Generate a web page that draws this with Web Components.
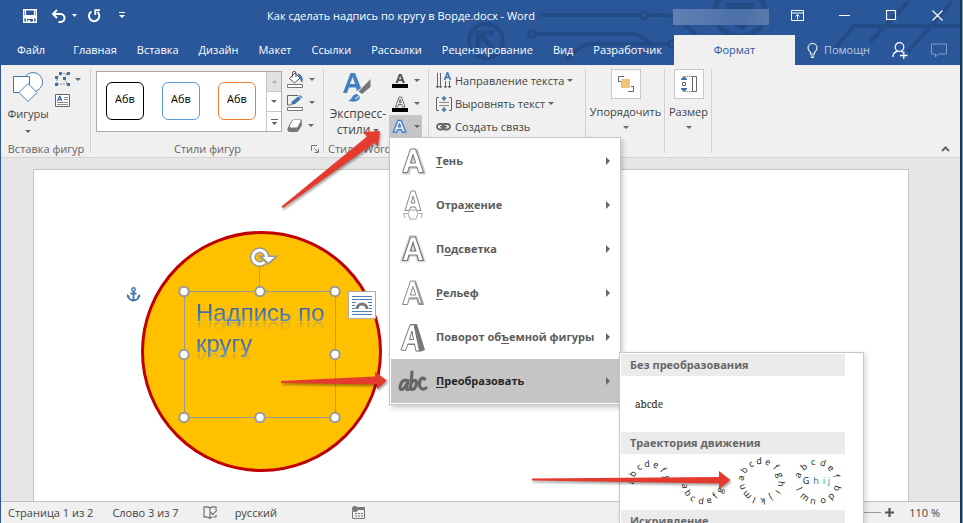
<!DOCTYPE html>
<html lang="ru">
<head>
<meta charset="utf-8">
<title>Как сделать надпись по кругу в Ворде.docx - Word</title>
<style>
html, body { margin: 0; height: 100%; overflow: hidden; }
body { font: 11px/16px "Open Sans", "Noto Sans", sans-serif; color: #444; background: #6aa0b8; }
</style>
</head>
<body>
<word-window></word-window>
<script>
function define(name, css, html) {
  customElements.define(name, class extends HTMLElement {
    connectedCallback() {
      if (this.shadowRoot) return;
      const root = this.attachShadow({ mode: 'open' });
      root.innerHTML = '<style>*{box-sizing:border-box}button{font:inherit;color:inherit;background:none;border:0;padding:0;margin:0;text-align:inherit}' + css + '</style>' +
        (typeof html === 'function' ? html(this) : html);
    }
  });
}

const A = 'M2.5 25.5 L10.5 2 H15.5 L23.5 25.5 H18.5 L17 20 H9 L7.5 25.5 Z M10.3 16 H15.7 L13 7.5 Z';
const ICONS = {
  save: [14, 14, '<path d="M.7.7h12.6v12.6H.7z" fill="none" stroke="#fff" stroke-width="1.4"/><path d="M2.5 1v5.5h9V1M3.5 13.5V9.5h7v4" fill="none" stroke="#fff" stroke-width="1.2"/><path d="M1 6.5h12v3H1z" fill="#fff"/><path d="M5 11h2v3H5z" fill="#fff"/>'],
  undo: [15, 14, '<path d="M2 5h7.5a4 4 0 0 1 0 8H7.5" fill="none" stroke="#fff" stroke-width="2"/><path d="M6 1 2 5l4 4" fill="none" stroke="#fff" stroke-width="2"/>'],
  redo: [14, 14, '<path d="M4.5 2.5A5.2 5.2 0 1 0 10.5 3" fill="none" stroke="#fff" stroke-width="2"/><path d="M13 1.2H8.3V6" fill="none" stroke="#fff" stroke-width="1.8"/>'],
  qat: [6, 7, '<path d="M0 .5h6" stroke="#fff"/><path d="M0 3h6L3 6z" fill="#fff"/>'],
  downw: [5, 3, '<path d="M0 0h5L2.5 3z" fill="#fff"/>'],
  down: [6, 3, '<path d="M0 0h6L3 3z" fill="#666"/>'],
  up: [5, 3, '<path d="M0 3h5L2.5 0z" fill="#ababab"/>'],
  more: [7, 6, '<path d="M0 .5h7" stroke="#666"/><path d="M.5 3h6l-3 3z" fill="#666"/>'],
  right: [4, 8, '<path d="M0 0v8l4-4z" fill="#666"/>'],
  opts: [13, 11, '<path d="M.5.500h12v10H.5zM.5 3h12M6.500 9.500V5M4.500 6.500l2-2 2 2" fill="none" stroke="#fff"/>'],
  min: [11, 11, '<path d="M0 5.500h11" stroke="#fff"/>'],
  max: [11, 11, '<path d="M.5.500h9v9h-9z" fill="none" stroke="#fff" stroke-width="1.200"/>'],
  close: [11, 11, '<path d="M.5.500l10 10m0-10-10 10" stroke="#fff" stroke-width="1.200"/>'],
  bulb: [11, 15, '<path d="M3.500 11V9.500C2 8 1 6.800 1 5a4.500 4.500 0 0 1 9 0c0 1.800-1 3-2.500 4.500V11zM3.500 13h4" fill="none" stroke="#e8eef6" stroke-width="1.200"/><path d="M4 14.500h3" stroke="#e8eef6"/>'],
  person: [16, 17, '<circle cx="7.500" cy="5" r="4.300" fill="none" stroke="#fff" stroke-width="1.200"/><path d="M.8 15c.4-3.800 2.500-5.500 5-6M9 9l2 1.500M8 13.500h7.500M11.800 9.500v7.500" fill="none" stroke="#fff" stroke-width="1.300"/>'],
  bubble: [17, 15, '<path d="M.5 1h15v10H7.500l-3 3v-3h-4z" fill="none" stroke="#7f9cc7"/>'],
  shapes: [30, 30, '<circle cx="20" cy="10" r="9.500" fill="#fff" stroke="#4a80b8"/><path d="M.5 4.500h16v16H.5z" fill="#fff" stroke="#3c74ad"/><path d="M15 11.500 24 20.500 15 29.500 6 20.500z" fill="#fff" stroke="#4a80b8"/>'],
  points: [16, 14, '<path d="M5 1.500h8M12 2 9 7l4 5M2 12h11M5 2 2 6v6" fill="none" stroke="#888" stroke-dasharray="2 1"/><path d="M4 0h3v3H4zM12 0h3v3h-3zM0 4h3v3H0zM8 5h3v3H8zM0 11h3v3H0zM12 11h3v3h-3z" fill="#3c74ad"/>'],
  textbox: [15, 13, '<path d="M.5.500h14v12H.5z" fill="#fff" stroke="#666"/><path d="M9 3.500h4M9 5.500h4M2 8.500h11M2 10.500h11" stroke="#888"/><path d="M2.500 7 4.500 2.500h.5L7 7M3 5.500h3" fill="none" stroke="#3c74ad" stroke-width="1.300"/>'],
  fill: [17, 17, '<path d="M.5 13.500h15v3H.5z" fill="#fff" stroke="#777"/><path d="M2.500 7.500 8 2l5 5-5.500 5z" fill="#fff" stroke="#555"/><path d="M5.500 6V2a1.700 1.700 0 0 1 3.400 0v4" fill="none" stroke="#555"/><path d="M10 2.500c4 .5 6.500 3.500 5.500 9-1.500-.5-2.500-3-2.500-5z" fill="#3c74ad"/>'],
  outline: [17, 17, '<path d="M.5 13.500h15v3H.5z" fill="#fff" stroke="#777"/><path d="M11 1.500H.5v9.500H4" fill="none" stroke="#666"/><path d="M4 11l1-3.500L13 1l2.500 2.500L8 10z" fill="#3c74ad"/><path d="M11.500 2l3 3" stroke="#fff"/>'],
  effect: [16, 13, '<path d="M1 8.500 4 2.500Q4.800.5 7 .5h6.500q1.800 0 1.300 2v4l-3 5q-.8 1.500-3 1.500H3Q0 13 .5 10z" fill="#777"/><path d="M5.200 2Q6 1 7 1h5.500q1.500 0 1 1.300L11 7.500q-.5 1-2 1H4q-1.800 0-1.200-1.500z" fill="#fff"/>'],
  launch: [8, 8, '<path d="M.5 6V.500H6M3.500 3.500 7 7M7.500 3.500v4h-4" fill="none" stroke="#777"/>'],
  express: [30, 31, '<path d="M0 21 7.500 1h4.500L18 16l-4 3-1.300-3.500H6L4 21zM7 12h5L9.600 5z" fill="#4382be" fill-rule="evenodd"/><path d="M27.500 7v8L19 22l-3.500-2.500z" fill="#777"/><path d="M15 20l4 3-2 2-4-3z" fill="#fff"/><path d="M5 28.500c4 0 4-6 8-6.500 3 .500 5 3 3 5.500-3 3-8 2.500-11 1z" fill="#4382be"/><path d="M12 26c2 1 3 0 3-2" stroke="#fff" fill="none"/>'],
  afill: [16, 15, '<path d="M0 11h16v4H0z" fill="#000"/><path d="M3.500 10 7 1h2.500L13 10h-2.500l-.7-2H6.500L5.800 10zM7 6.300h2.300L8.200 3z" fill="#555" fill-rule="evenodd"/>'],
  aline: [16, 16, '<path d="M0 12h16v4H0z" fill="#000"/><path d="M3.500 11 7 1h2.500L13 11h-2.500l-.7-2.500H6.500L5.800 11zM7 6.800h2.300L8.200 3z" fill="#fff" stroke="#666" fill-rule="evenodd"/>'],
  aeff: [16, 15, '<path d="M1.500 13 6 1.500h3L13.500 13H10.500L9.500 10.500h-4L4.500 13zM6.300 8h2.400L7.500 4.500z" fill="#e8f0fa" stroke="#7fa9d8" stroke-width="2.500" fill-rule="evenodd"/><path d="M1.500 13 6 1.500h3L13.500 13H10.500L9.500 10.500h-4L4.500 13zM6.300 8h2.400L7.500 4.500z" fill="#dfe9f5" stroke="#3c74b5" fill-rule="evenodd"/>'],
  dir: [16, 17, '<path d="M1.500 1v15M4.500 1v15M9.500 9v7M13.500 9v7" stroke="#666"/><path d="M0 14l1.500 2L3 14M3.500 14l1 2 1.500-2M8 14l1.500 2 1.500-2M12 14l1.500 2 1.500-2" fill="none" stroke="#666"/><path d="M8.500 8 11.500.5 14.500 8M9.500 5.500h4" fill="none" stroke="#3c74ad" stroke-width="1.600"/>'],
  align: [16, 16, '<path d="M3 1.500H.5v13H3M13 1.500h2.500v13H13" fill="none" stroke="#666"/><path d="M3 6.500h10M3 9.500h10" stroke="#888"/><path d="M8 1v4M6 3l2-2 2 2M8 11v4M6 13l2 2 2-2" fill="none" stroke="#3c74ad" stroke-width="1.500"/>'],
  link: [16, 8, '<rect x="1" y="1" width="7.500" height="5.500" rx="2.700" fill="none" stroke="#666" stroke-width="1.800"/><rect x="6.500" y="1" width="7.500" height="5.500" rx="2.700" fill="none" stroke="#666" stroke-width="1.800"/><path d="M4 3.700h7" stroke="#666" stroke-width="1.500"/>'],
  arrange: [16, 16, '<path d="M.5 6V.500H6M10 15.500h5.500V10" fill="none" stroke="#666"/><path d="M3 3h9v9H3z" fill="#efc477"/><path d="M1 5.500h2M13 10.500h2" stroke="#666"/>'],
  size: [16, 16, '<path d="M11.500.500h4v15h-4z" fill="#fff" stroke="#666"/><path d="M4 .5h7M4 15.500h7" stroke="#777" stroke-dasharray="1 1"/><path d="M1.500 6.500h3v3h-3z" fill="#fff" stroke="#666"/><path d="M3 0 6 3v1H0V3zM3 16l3-3v-1H0v1z" fill="#3c74ad"/>'],
  chevron: [9, 6, '<path d="M1 5l3.500-3.500L8 5" fill="none" stroke="#666" stroke-width="2"/>'],
  proof: [15, 14, '<path d="M7 12V2Q5 .5 1 1v10q4-.5 6 1.500Q8 11 10 11M7 2Q9 .5 13 1v3M10.500 11H13V9M8 6.500l2 2L14 4" fill="none" stroke="#666" stroke-width="1.100"/>'],
  macro: [13, 13, '<path d="M.5 5v7.500h12V3H5" fill="#f0f0f0" stroke="#777"/><path d="M6 1h7v3H6z" fill="#777"/><path d="M3 7.500h8M3 10h8" stroke="#777" stroke-dasharray="2 1"/><circle cx="3" cy="3" r="3" fill="#777"/>'],
  plus: [9, 9, '<path d="M0 4.500h9M4.500 0v9" stroke="#555" stroke-width="2.200"/>'],
  shadow: [26, 29, `<path d="${A}" transform="translate(1.500 1)" fill="#bbb" stroke="#ccc" stroke-width="2" fill-rule="evenodd"/><path d="${A}" fill="#fff" stroke="#777" fill-rule="evenodd"/>`],
  reflect: [26, 31, `<path d="M5 20.500 11 1h4L21 20.500H16.500L15.500 17h-5L9.500 20.500zM11 13h4L13 6z" fill="#fff" stroke="#888" fill-rule="evenodd"/><path d="M3.500 23.500H8L10 20h6l2 3.500h4.500M3.500 23.500 5 28M22.500 23.500 21 28M8 23.500 10 29h6l2-5.500" fill="none" stroke="#aaa"/>`],
  glow: [26, 29, `<path d="${A}" fill="#ddd" stroke="#ddd" stroke-width="4"/><path d="${A}" fill="#fff" stroke="#777" stroke-width="1.200" fill-rule="evenodd"/>`],
  bevel: [26, 29, `<path d="${A}" fill="#fff" stroke="#888" fill-rule="evenodd"/><path d="M15 3l7 21.500h-3L17.500 19H8.500" fill="none" stroke="#999" stroke-width="1.500"/>`],
  rotate: [26, 29, '<path d="M10 1h7l8 26-4 1.500h-3L11 4z" fill="#777"/><path d="M9 18h9l2 4H8z" fill="#888"/><path d="M1 27 10 2l4-.5L19.500 28H16l-1.500-7H8L5.500 27.500zM9.500 16.500h4L12 8z" fill="#fff" stroke="#777" fill-rule="evenodd"/>'],
  abc: [30, 22, '<g fill="none" stroke="#666" stroke-width="3.200" stroke-linecap="round"><path d="M9 10.500c-4-2-6.500 3-7 6.500-.5 4 4 3 6-2M10 10.500 8.500 18q.5 2.500 2.500 1"/><path d="M14 2 12.500 18.500q1.500 1.800 4 0 3-4 1.500-7.500-2-2-4.500 2"/><path d="M26.500 9q-2-2-4 .5-2 4-.5 7.500 2 3.500 6 1"/></g>'],
  anchor: [13, 15, '<circle cx="6.500" cy="2.500" r="1.700" fill="none" stroke="#3c74ad" stroke-width="1.400"/><path d="M6.500 4v9.500M3.500 6.500h6M1 8.500q.5 4.500 5.500 5 5-.500 5.500-5" fill="none" stroke="#3c74ad" stroke-width="1.800"/><path d="M0 10.500V7l3 2.500zM13 10.500V7l-3 2.500z" fill="#3c74ad"/>'],
  wrap: [20, 20, '<path d="M0 1.500h20M0 4.500h20M0 16.500h20M0 19.500h20M0 7.500h4M0 10.500h3M0 13.500h3M16 7.500h4M17 10.500h3M17 13.500h3" stroke="#4a80b8"/><path d="M5 14a5 5 0 0 1 10 0" fill="none" stroke="#777" stroke-width="3"/>']
};
define('w-icon', ':host{display:inline-flex;flex:none}svg{display:block}', el => {
  const [w, h, s] = ICONS[el.getAttribute('name')];
  return `<svg width="${w}" height="${h}" viewBox="0 0 ${w} ${h}" aria-hidden="true">${s}</svg>`;
});
const ic = n => `<w-icon name="${n}"></w-icon>`;

define('title-bar', `
:host{display:flex;align-items:center;height:35px;color:#fff;position:relative;padding-bottom:4px}
.qat{display:flex;align-items:center;gap:6px;padding-left:22px;width:128px}
.qat button:nth-child(2){margin-left:8px}.qat button:nth-child(4){margin-left:4px}.qat button:nth-child(5){margin-left:12px}
.t{flex:1;text-align:center;white-space:nowrap}
.acct{width:96px;height:16px;margin-top:2px;background:linear-gradient(90deg,#6080b2,#5577ad 40%,#4c70a8 70%,#5b7aa8)}
.win{display:flex;justify-content:space-between;width:152px;margin:0 17px 0 22px}
button{display:flex}`,
`<div class="qat"><button aria-label="Сохранить">${ic('save')}</button><button aria-label="Отменить">${ic('undo')}</button><button aria-label="Список отмены">${ic('downw')}</button><button aria-label="Повторить">${ic('redo')}</button><button aria-label="Настройка панели">${ic('qat')}</button></div>
<div class="t">Как сделать надпись по кругу в Ворде.docx - Word</div><div class="acct"></div>
<div class="win"><button aria-label="Параметры ленты">${ic('opts')}</button><button aria-label="Свернуть">${ic('min')}</button><button aria-label="Развернуть">${ic('max')}</button><button aria-label="Закрыть">${ic('close')}</button></div>`);

define('ribbon-tab', `:host{display:flex;flex:none}button{padding:0 10px;height:30px;color:#fff;white-space:nowrap}
:host([selected]) button{background:#f0f0f0;color:#2a579a;width:121px;text-align:center}`,
'<button role="tab"><slot></slot></button>');

define('tab-strip', `:host{display:flex;align-items:center;height:30px;position:relative;padding-left:6px}
nav{display:flex;flex:none}ribbon-tab:first-child{margin-right:8px}ribbon-tab[selected]{margin-left:2px}
.help{display:flex;align-items:center;gap:6px;color:#b8c9e2;margin-left:12px}
.end{display:flex;align-items:center;gap:23px;margin:0 12px 0 auto}.end button{display:flex}`,
`<nav role="tablist">${['Файл', 'Главная', 'Вставка', 'Дизайн', 'Макет', 'Ссылки', 'Рассылки', 'Рецензирование', 'Вид', 'Разработчик'].map(t => `<ribbon-tab>${t}</ribbon-tab>`).join('')}<ribbon-tab selected>Формат</ribbon-tab></nav>
<button class="help">${ic('bulb')}<span>Помощн</span></button>
<div class="end"><button aria-label="Общий доступ">${ic('person')}</button><button aria-label="Примечания">${ic('bubble')}</button></div>`);

define('circuit-art', ':host{position:absolute;right:0;top:0;width:500px;height:65px}svg{display:block}',
`<svg width="500" height="65" fill="none" stroke="#234b86" stroke-width="4" aria-hidden="true"><circle cx="26" cy="41" r="17"/><path d="M18 50V33h16M19 34l14 14" stroke-width="5"/><path d="M80 15h100M188 15h18q10 0 16 7l14 12M76 34h94q10 0 18 7l6 5M106 60l12-11q6-5 14-5h76"/><circle cx="184" cy="15" r="3.500" stroke-width="3"/><circle cx="72" cy="34" r="3.500" stroke-width="3"/><circle cx="212" cy="44" r="3.500" stroke-width="3"/><circle cx="280" cy="12" r="25" stroke-width="6"/><path d="M268 5h24v14l-10 9-14-8z" fill="#234b86"/><path d="M370 54l24-28h106M410 42l38-40M448 52 492 2"/></svg>`);

define('ribbon-group', `:host{display:flex;flex-direction:column;flex:none;height:88px;margin-top:4px;position:relative;background:linear-gradient(#d0d0d0,#d0d0d0) top right/1px 84px no-repeat}
.b{flex:1;display:flex;min-height:0}.l{display:flex;align-items:center;justify-content:center;height:16px;line-height:16px;color:#666;white-space:nowrap}
:host([start]) .l{justify-content:flex-start;padding-left:4px}
.x{position:absolute;right:5px;bottom:4px;display:flex}`,
el => `<div class="b"><slot></slot></div><div class="l">${el.getAttribute('label') || ''}</div>${el.hasAttribute('launch') ? `<button class="x" aria-label="Параметры">${ic('launch')}</button>` : ''}`);

define('style-swatch', `:host{display:flex}button{width:38px;height:38px;border:1px solid var(--c);border-radius:6px;background:#fff;color:#000;font:11px/16px "Open Sans","Noto Sans",sans-serif;text-align:center;padding-bottom:4px}`, '<button>Абв</button>');

define('ribbon-bar', `
:host{display:flex;height:93px;background:#f0f0f0;border-bottom:1px solid #d4d4d4;position:relative}
.big{display:flex;flex-direction:column;align-items:center;line-height:16px;white-space:nowrap}
.col{display:flex;flex-direction:column}.row{display:flex;align-items:center;gap:6px}
.g1{width:90px}.g2{width:233px}.g3{width:105px}.g4{width:157px}.g5{width:79px}.g6{width:47px}
.g1 .big{width:54px;padding-top:3px;gap:4px}.g1 .big w-icon:last-child{margin-top:4px}
.g1 .col{gap:8px;padding-top:3px}.g1 .row{gap:4px}
.gal{display:flex;width:186px;height:61px;margin:2px 0 0 5px;border:1px solid #ababab;background:#fff}
.sw{flex:1;display:flex;gap:18px;padding:10px 0 0 9px}
.scr{display:flex;flex-direction:column;width:15px;border-left:1px solid #c6c6c6}
.scr button{flex:1;display:flex;align-items:center;justify-content:center}.scr button+button{border-top:1px solid #c6c6c6}.scr button:first-child{background:#e1e1e1}
.g2 .fx{gap:6px;padding:2px 0 0 5px}.g2 .row{height:17px;gap:5px}
.g3 .big{width:65px;padding:3px 0 0 3px;font-size:12px}.g3 .big w-icon{margin-bottom:3px}.st{display:flex;align-items:center;gap:3px}.g3 .big .st w-icon{margin:0}
.g3 .row{width:33px;height:23px;padding-left:3px;gap:6px}.g3 .on{background:#c5c5c5}
.g4 .row{height:23px;padding-left:7px;gap:3px;white-space:nowrap}
.sq{width:30px;height:30px;background:#fdfdfd;border:1px solid #c8c8c8;display:flex;align-items:center;justify-content:center;margin-bottom:5px}
.g5 .big,.g6 .big{flex:1}.g5 .big>w-icon,.g6 .big>w-icon{margin-top:6px}
.fold{position:absolute;right:10px;bottom:5px;display:flex}`,
`<ribbon-group class="g1" label="Вставка фигур"><button class="big">${ic('shapes')}<span>Фигуры</span>${ic('down')}</button>
<div class="col"><button class="row" aria-label="Изменить фигуру">${ic('points')}${ic('down')}</button><button class="row" aria-label="Надпись">${ic('textbox')}</button></div></ribbon-group>
<ribbon-group class="g2" label="Стили фигур" launch><div class="gal"><div class="sw"><style-swatch style="--c:#000"></style-swatch><style-swatch style="--c:#5b9bd5"></style-swatch><style-swatch style="--c:#ed7d31"></style-swatch></div>
<div class="scr"><button aria-label="Вверх">${ic('up')}</button><button aria-label="Вниз">${ic('down')}</button><button aria-label="Ещё">${ic('more')}</button></div></div>
<div class="col fx">${[['fill', 'Заливка'], ['outline', 'Контур'], ['effect', 'Эффекты']].map(x => `<button class="row" aria-label="${x[1]}">${ic(x[0])}${ic('down')}</button>`).join('')}</div></ribbon-group>
<ribbon-group class="g3" label="Стили WordArt" start><button class="big">${ic('express')}<span>Экспресс-</span><span class="st">стили${ic('down')}</span></button>
<div class="col"><button class="row" aria-label="Заливка текста">${ic('afill')}${ic('down')}</button><button class="row" aria-label="Контур текста">${ic('aline')}${ic('down')}</button><button class="row on" aria-label="Текстовые эффекты">${ic('aeff')}${ic('down')}</button></div></ribbon-group>
<ribbon-group class="g4"><div class="col"><button class="row">${ic('dir')}<span>Направление текста</span>${ic('down')}</button><button class="row">${ic('align')}<span>Выровнять текст</span>${ic('down')}</button><button class="row">${ic('link')}<span>Создать связь</span></button></div></ribbon-group>
<ribbon-group class="g5"><button class="big"><span class="sq">${ic('arrange')}</span><span>Упорядочить</span>${ic('down')}</button></ribbon-group>
<ribbon-group class="g6"><button class="big"><span class="sq">${ic('size')}</span><span>Размер</span>${ic('down')}</button></ribbon-group>
<button class="fold" aria-label="Свернуть ленту">${ic('chevron')}</button>`);

const knobs = [[184, 291], [260, 291], [335, 291], [184, 354], [335, 354], [184, 417], [260, 417], [335, 417]];
define('circle-shape', `:host{position:absolute;left:107px;top:61px;width:242px;height:242px}
svg{position:absolute;inset:0}
.txt{position:absolute;left:55px;top:66px;width:150px;font:24px/31px "Liberation Sans",Arial,sans-serif}
.txt span{display:block;width:max-content;color:transparent;background:linear-gradient(#44618c 15%,#3f6cab 45%,#5c8fd0 85%);-webkit-background-clip:text;background-clip:text;-webkit-box-reflect:below -13px linear-gradient(transparent 50%,rgba(0,0,0,.4) 80%)}
.anc{position:absolute;left:-14px;top:56px}.lay{position:absolute;left:207px;top:60px;width:28px;height:28px;border:1px solid #ababab;background:#fff;display:flex;align-items:center;justify-content:center}`,
`<svg width="242" height="242" viewBox="141 231 242 242"><circle cx="261.500" cy="351.500" r="119" fill="#ffc000" stroke="#c00000" stroke-width="3"/><path d="M184.500 291.500h151v126h-151zM259.500 291V267" fill="none" stroke="#999"/></svg>
<div class="txt"><span>Надпись по</span><span>кругу</span></div>
<svg width="242" height="242" viewBox="141 231 242 242" fill="#fff" stroke="#999" stroke-width="2">${knobs.map(k => `<circle cx="${k[0]}" cy="${k[1] + 0.5}" r="4.700"/>`).join('')}
<path d="M264.500 262A6.800 6.800 0 1 1 266.500 257" fill="none" stroke-width="6"/><path d="M261.500 257h13.500l-6.500 6z" stroke-width="3"/><path d="M264.500 262A6.800 6.800 0 1 1 266.500 257" fill="none" stroke="#fff" stroke-width="3"/><path d="M262.500 257h12l-6 5.500z" stroke="none"/></svg>
<w-icon class="anc" name="anchor"></w-icon><button class="lay" aria-label="Параметры разметки">${ic('wrap')}</button>`);

define('doc-canvas', `:host{display:block;flex:1;min-height:0;background:#e6e6e6;padding:11px 51px 0 32px;overflow:hidden}
.page{position:relative;height:100%;background:#fff;border:1px solid #c6c6c6;border-bottom:0}`, '<div class="page"><circle-shape></circle-shape></div>');

define('status-bar', `:host{display:flex;align-items:center;flex:none;height:22px;background:#f0f0f0;border-top:1px solid #c0c0c0;padding:0 20px 0 7px;white-space:nowrap}
.a{display:flex;align-items:center}.w{margin:0 24px 0 19px}.m{display:flex;margin-left:75px}.r{margin-left:17px}
.z{margin-left:auto;display:flex;align-items:center;gap:4px}input{appearance:none;width:96px;height:1px;background:#999;margin:0}
input::-webkit-slider-thumb{appearance:none;width:5px;height:11px;background:#666}.p{margin-left:11px}button{display:flex}`,
`<div class="a"><span>Страница 1 из 2</span><span class="w">Слово 3 из 7</span>${ic('proof')}<span class="r">русский</span><span class="m">${ic('macro')}</span></div>
<div class="z"><input type="range" aria-label="Масштаб" value="20"><button aria-label="Увеличить">${ic('plus')}</button><span class="p">110 %</span></div>`);

define('menu-row', `:host{display:block}button{display:flex;align-items:center;width:100%;height:44px;padding:0 9px 0 6px;font-weight:700;color:#5c5c5c}
.i{display:flex;justify-content:center;width:32px;margin-right:7px}.t{flex:1;white-space:nowrap}
:host([on]) button{background:#c5c5c5;color:#262626}`,
el => `<button role="menuitem"><span class="i">${ic(el.getAttribute('icon'))}</span><span class="t"><slot></slot></span>${ic('right')}</button>`);

define('effects-menu', `:host{position:absolute;left:388px;top:137px;width:232px;background:#fff;border:1px solid #c6c6c6;padding:1px;box-shadow:2px 3px 5px rgba(0,0,0,.2)}u{text-underline-offset:2px}`,
`<div role="menu"><menu-row icon="shadow"><u>Т</u>ень</menu-row><menu-row icon="reflect">Отра<u>ж</u>ение</menu-row><menu-row icon="glow">П<u>о</u>дсветка</menu-row><menu-row icon="bevel"><u>Р</u>ельеф</menu-row><menu-row icon="rotate">Поворот об<u>ъ</u>емной фигуры</menu-row><menu-row icon="abc" on><u>П</u>реобразовать</menu-row></div>`);

/* Letters set along an arc: deg is the angle of the first letter, step the turn per letter. */
function arc(str, cx, cy, r, deg, step, inner) {
  return [...str].map((ch, i) => {
    const a = deg + i * step, t = a * Math.PI / 180;
    const x = Math.round(cx + r * Math.cos(t)), y = Math.round(cy + r * Math.sin(t));
    return `<text transform="translate(${x} ${y}) rotate(${Math.round(inner ? a - 90 : a + 90)})" y="3">${ch}</text>`;
  }).join('');
}
define('transform-gallery', `:host{position:absolute;left:618px;top:352px;bottom:0;width:245px;background:#fff;border:1px solid #c6c6c6;border-bottom:0;padding:1px 18px 0 1px;overflow:hidden;box-shadow:2px 2px 5px rgba(0,0,0,.15)}
h3{margin:0;height:22px;font:700 11px/22px "Open Sans","Noto Sans",sans-serif;color:#666;background:#ebebeb;padding-left:9px;white-space:nowrap}
.p{display:flex;height:56px}.p button{width:56px}.none{font:10px/14px "Noto Serif","DejaVu Serif",serif;color:#222;text-align:center}
svg{display:block;font:9px "Open Sans","Noto Sans",sans-serif;fill:#111;text-anchor:middle}`,
`<h3>Без преобразования</h3><div class="p"><button class="none">abcde</button></div><h3>Траектория движения</h3>
<div class="p"><button aria-label="Дуга"><svg width="56" height="56">${arc('abcdefg', 28, 28, 18, 180, 28)}</svg></button>
<button aria-label="Дуга вниз"><svg width="56" height="56">${arc('abcdefg', 26, 29, 18, 172, -25, true)}</svg></button>
<button aria-label="Круг"><svg width="56" height="56">${arc('abcdefghijklmn', 28, 27, 20, 188, 25.7)}</svg></button>
<button aria-label="Кнопка"><svg width="56" height="56">${arc('abcdef', 28, 28, 20, 202, 28)}<text y="30"><tspan x="17">G</tspan><tspan x="27" fill="#1d6f86">h</tspan><tspan x="35" fill="#1d8fc0">i</tspan><tspan x="40" fill="#1d8f96">j</tspan></text>${arc('lmnopq', 28, 27, 20, 155, -27, true)}</svg></button></div><h3>Искривление</h3>`);

define('pointer-arrows', ':host{position:absolute;inset:0;pointer-events:none}svg{display:block;filter:drop-shadow(1px 2px 1px rgba(0,0,0,.35))}',
`<svg width="100%" height="100%" fill="#e53b2f" aria-hidden="true"><path transform="translate(-1 0)" d="M281.500 206.500 367 136.500 363.500 132 380 131 378 146.500 374.500 143 283 208zM281 381 375 376.500V371.500L387 380.500 377 389.500V384.500L281 383zM532 478.500 719 477V471L730.500 480 719 489V483.500L532 480.500z"/></svg>`);

define('word-window', `:host{display:flex;flex-direction:column;height:100vh;position:relative;margin-right:1px;border-left:1px solid #2a579a;border-right:2px solid #253650;overflow:hidden;background:#2a579a}
header{position:relative;background:#2a579a;flex:none}`,
`<header><circuit-art></circuit-art><title-bar></title-bar><tab-strip></tab-strip></header><ribbon-bar></ribbon-bar><doc-canvas></doc-canvas><status-bar></status-bar><effects-menu></effects-menu><transform-gallery></transform-gallery><pointer-arrows></pointer-arrows>`);
</script>
</body>
</html>
